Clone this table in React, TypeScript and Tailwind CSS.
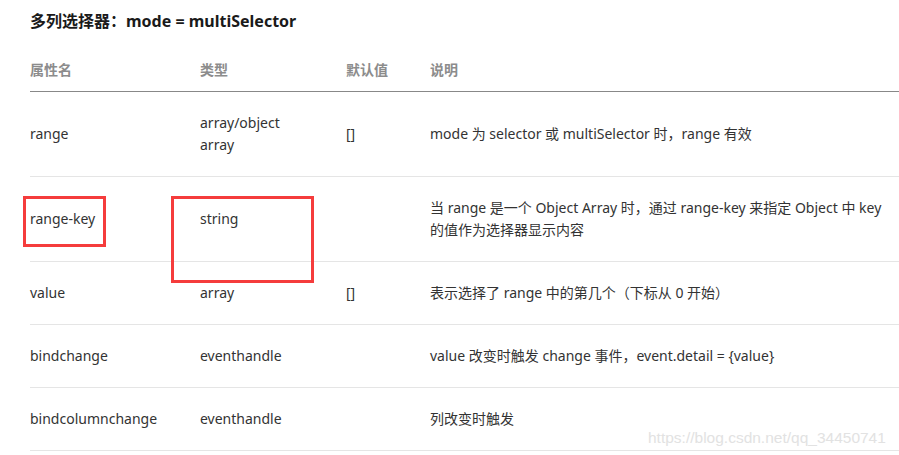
const rows = [
  {
    name: "range",
    type: ["array/object", "array"],
    def: "[]",
    desc: ["mode 为 selector 或 multiSelector 时，range 有效"],
  },
  {
    name: "range-key",
    type: ["string"],
    def: "",
    desc: [
      "当 range 是一个 Object Array 时，通过 range-key 来指定 Object 中 key",
      "的值作为选择器显示内容",
    ],
  },
  {
    name: "value",
    type: ["array"],
    def: "[]",
    desc: ["表示选择了 range 中的第几个（下标从 0 开始）"],
  },
  {
    name: "bindchange",
    type: ["eventhandle"],
    def: "",
    desc: ["value 改变时触发 change 事件，event.detail = {value}"],
  },
  {
    name: "bindcolumnchange",
    type: ["eventhandle"],
    def: "",
    desc: ["列改变时触发"],
  },
]

const font = { fontFamily: '"Noto Sans", "Noto Sans CJK SC", sans-serif' }

export default function App() {
  return (
    <div className="relative h-[455px] w-[899px] overflow-hidden bg-white pl-[30px] text-[#333]" style={font}>
      <h2 className="pt-[9px] text-[16px] font-bold leading-[24px] text-[#1a1a1a]">
        多列选择器：mode = multiSelector
      </h2>
      <table className="w-[869px] table-fixed border-collapse text-left text-[14px] leading-[22px]">
        <colgroup>
          <col className="w-[170px]" />
          <col className="w-[146px]" />
          <col className="w-[84px]" />
          <col />
        </colgroup>
        <thead>
          <tr className="border-b border-[#888]">
            <th className="pt-[26px] pb-[10px] font-semibold text-[#8c8c8c]">属性名</th>
            <th className="pt-[26px] pb-[10px] font-semibold text-[#8c8c8c]">类型</th>
            <th className="pt-[26px] pb-[10px] font-semibold text-[#8c8c8c]">默认值</th>
            <th className="pt-[26px] pb-[10px] font-semibold text-[#8c8c8c]">说明</th>
          </tr>
        </thead>
        <tbody>
          {rows.map((r) => (
            <tr key={r.name} className="border-b border-[#e5e5e5]">
              <td className="py-[20px] align-middle">{r.name}</td>
              <td className="py-[20px] align-middle">
                {r.type.map((t) => (
                  <div key={t}>{t}</div>
                ))}
              </td>
              <td className="py-[20px] align-middle">{r.def}</td>
              <td className="py-[20px] align-middle">
                {r.desc.map((d) => (
                  <div key={d} className="whitespace-nowrap">{d}</div>
                ))}
              </td>
            </tr>
          ))}
        </tbody>
      </table>

      {/* red annotation boxes */}
      <div className="absolute left-[23px] top-[196px] h-[51px] w-[83px] border-[3px] border-[#f53c3c]" />
      <div className="absolute left-[171px] top-[196px] h-[87px] w-[143px] border-[3px] border-[#f53c3c]" />

      {/* watermark */}
      <div
        className="absolute left-[648px] top-[427px] whitespace-nowrap text-[15.5px] leading-[22px] text-[#e2e2e2]"
        style={{ fontFamily: '"Liberation Sans", Arial, sans-serif' }}
      >
        https://blog.csdn.net/qq_34450741
      </div>
    </div>
  )
}
